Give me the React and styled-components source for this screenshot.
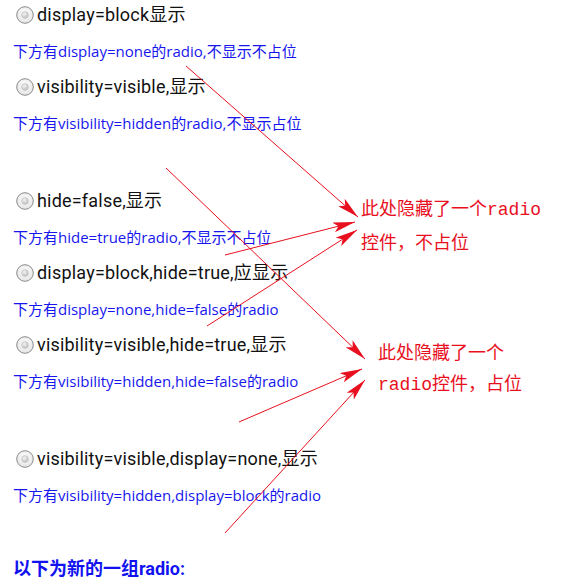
import React from "react";
import styled, { createGlobalStyle } from "styled-components";

const GlobalStyle = createGlobalStyle`
  html, body {
    margin: 0;
    padding: 0;
    background: #ffffff;
  }
  body {
    font-family: Roboto, "Noto Sans CJK SC", sans-serif;
  }
`;

const items = [
  { type: "radio", text: "display=block显示" },
  { type: "note", text: "下方有display=none的radio,不显示不占位" },
  { type: "radio", text: "visibility=visible,显示" },
  { type: "note", text: "下方有visibility=hidden的radio,不显示占位" },
  { type: "space" },
  { type: "radio", text: "hide=false,显示" },
  { type: "note", text: "下方有hide=true的radio,不显示不占位" },
  { type: "radio", text: "display=block,hide=true,应显示" },
  { type: "note", text: "下方有display=none,hide=false的radio" },
  { type: "radio", text: "visibility=visible,hide=true,显示" },
  { type: "note", text: "下方有visibility=hidden,hide=false的radio" },
  { type: "space" },
  { type: "radio", text: "visibility=visible,display=none,显示" },
  { type: "note", text: "下方有visibility=hidden,display=block的radio" },
];

const arrows = [
  [186, 66, 358, 217],
  [166, 168, 365, 359],
  [225, 255, 355, 222],
  [207, 326, 357, 230],
  [239, 422, 362, 369],
  [225, 533, 365, 380],
];

export default function App() {
  return (
    <>
      <GlobalStyle />
      <Page>
        <List>
          {items.map((item, i) => {
            if (item.type === "space") return <Spacer key={i} />;
            if (item.type === "note") return <Note key={i}>{item.text}</Note>;
            return (
              <RadioRow key={i}>
                <RadioIcon />
                <RadioText>{item.text}</RadioText>
              </RadioRow>
            );
          })}
          <Heading>以下为新的一组radio:</Heading>
        </List>

        <Arrows width="567" height="586" viewBox="0 0 567 586">
          <defs>
            <marker
              id="head"
              viewBox="0 0 22 10"
              markerWidth="22"
              markerHeight="10"
              refX="22"
              refY="5"
              orient="auto"
              markerUnits="userSpaceOnUse"
            >
              <path d="M0,0 L22,5 L0,10 L5,5 z" fill="#e8101e" />
            </marker>
          </defs>
          {arrows.map(([x1, y1, x2, y2], i) => (
            <line
              key={i}
              x1={x1}
              y1={y1}
              x2={x2}
              y2={y2}
              stroke="#e8101e"
              strokeWidth="1"
              markerEnd="url(#head)"
            />
          ))}
        </Arrows>

        <Callout $left={361} $top={192}>
          <div>此处隐藏了一个<Mono>radio</Mono></div>
          <div>控件，不占位</div>
        </Callout>
        <Callout $left={378} $top={336}>
          <div>此处隐藏了一个</div>
          <div><Mono>radio</Mono>控件，占位</div>
        </Callout>
      </Page>
    </>
  );
}

function RadioIcon() {
  return (
    <RadioSvg width="18" height="18" viewBox="0 0 18 18">
      <defs>
        <radialGradient id="rfill" cx="50%" cy="40%" r="60%">
          <stop offset="0%" stopColor="#ffffff" />
          <stop offset="100%" stopColor="#e4e4e4" />
        </radialGradient>
        <radialGradient id="rdot" cx="40%" cy="35%" r="70%">
          <stop offset="0%" stopColor="#f4f4f4" />
          <stop offset="100%" stopColor="#b8b8b8" />
        </radialGradient>
      </defs>
      <circle cx="9" cy="9" r="8.3" fill="url(#rfill)" stroke="#8c8c8c" strokeWidth="1" />
      <circle cx="9" cy="9" r="3.4" fill="url(#rdot)" stroke="#c4c4c4" strokeWidth="0.6" />
    </RadioSvg>
  );
}

const Page = styled.div`
  position: relative;
  width: 567px;
  height: 586px;
  overflow: hidden;
  background: #ffffff;
`;

const List = styled.div`
  display: flex;
  flex-direction: column;
  padding-left: 13px;
`;

const RadioRow = styled.div`
  display: flex;
  align-items: center;
  height: 30px;
  margin-bottom: 6px;
`;

const RadioSvg = styled.svg`
  flex: none;
  margin-left: 3px;
  margin-right: 3px;
`;

const RadioText = styled.span`
  font-size: 18px;
  letter-spacing: 0.2px;
  color: #111111;
  line-height: 30px;
  white-space: nowrap;
`;

const Note = styled.div`
  height: 30px;
  margin-bottom: 6px;
  font-family: "Open Sans", "Noto Sans CJK SC", sans-serif;
  font-size: 15px;
  line-height: 30px;
  color: #1616ee;
  white-space: nowrap;
`;

const Spacer = styled.div`
  height: 42px;
`;

const Heading = styled.div`
  margin-top: 38px;
  height: 30px;
  font-size: 18px;
  font-weight: bold;
  line-height: 30px;
  color: #1212f0;
  white-space: nowrap;
`;

const Arrows = styled.svg`
  position: absolute;
  left: 0;
  top: 0;
  pointer-events: none;
`;

const Callout = styled.div`
  position: absolute;
  left: ${(p) => p.$left}px;
  top: ${(p) => p.$top}px;
  font-family: "Noto Sans CJK SC", serif;
  font-size: 18px;
  line-height: 31px;
  color: #e8101e;
  white-space: nowrap;
`;

const Mono = styled.span`
  font-family: "Liberation Mono", monospace;
  font-size: 18px;
  font-weight: normal;
`;
